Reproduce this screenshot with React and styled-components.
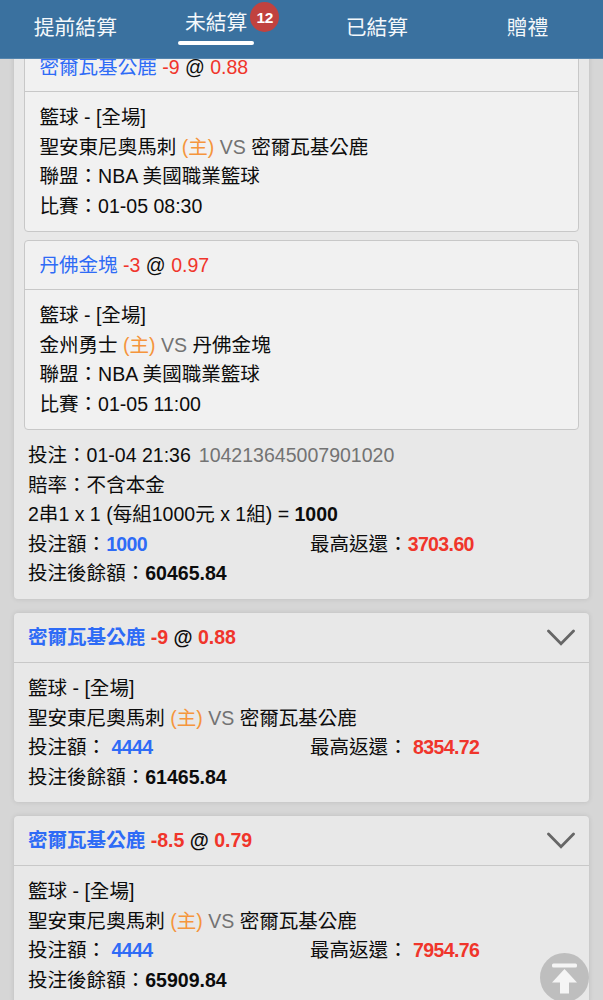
import React from 'react';
import styled, { createGlobalStyle } from 'styled-components';

const GlobalStyle = createGlobalStyle`
  * {
    box-sizing: border-box;
  }
  body {
    margin: 0;
    background: #d6d6d6;
    color: #0c0c0c;
    font-family: 'Liberation Sans', 'Noto Sans CJK TC', sans-serif;
    font-size: 19.55px;
    line-height: 29.5px;
  }
`;

const PageStyles = styled.div`
  height: 1000px;
  overflow: hidden;
`;

const TabBar = styled.nav`
  position: fixed;
  top: 0;
  left: 0;
  right: 0;
  z-index: 2;
  display: grid;
  grid-template-columns: repeat(4, 1fr);
  height: 59px;
  background: #3a719f;
  border-bottom: 1px solid #5585ad;
`;

const Tab = styled.div`
  display: flex;
  justify-content: center;
  align-items: flex-start;
  padding-top: ${({ $active }) => ($active ? '7px' : '12px')};
  padding-right: ${({ $active }) => ($active ? '20px' : '0')};
`;

const TabLabel = styled.span`
  position: relative;
  height: 38px;
  padding: 0 7px;
  color: #f4f8fb;
  font-size: 20.8px;
  line-height: 32px;

  &::after {
    content: '';
    display: ${({ $active }) => ($active ? 'block' : 'none')};
    height: 4px;
    margin: 2px -7px 0;
    border-radius: 2px;
    background: #fff;
  }
`;

const Badge = styled.span`
  position: absolute;
  top: -5px;
  right: -25px;
  width: 29px;
  height: 30px;
  border-radius: 50%;
  background: #c1423f;
  color: #fff;
  font-size: 15.5px;
  font-weight: bold;
  letter-spacing: -0.4px;
  line-height: 31px;
  text-align: center;
`;

const Feed = styled.main`
  display: flex;
  flex-direction: column;
  gap: 14px;
  padding: 0 14px;
`;

const Card = styled.section`
  flex: none;
  background: #e8e8e8;
  border-radius: 4px;
  box-shadow: 0 0 5px rgba(0, 0, 0, 0.12);
`;

const ParlayCard = styled(Card)`
  height: 599px;
  padding-top: 42px;
`;

const Legs = styled.div`
  display: flex;
  flex-direction: column;
  gap: 8px;
  padding: 0 10px;
`;

const Leg = styled.article`
  height: 190px;
  background: #f1f1f1;
  border: 1px solid #c8c8c8;
  border-radius: 4px;
`;

const LegTitle = styled.header`
  height: 49px;
  padding: 10px 14.5px 0;
  border-bottom: 1px solid #c8c8c8;
`;

const LegBody = styled.div`
  padding: 11px 14.5px 0;
`;

const CardTitle = styled.header`
  display: flex;
  justify-content: space-between;
  align-items: center;
  height: 50px;
  padding: 0 14px;
  font-weight: bold;
  border-bottom: 1px solid #c8c8c8;
`;

const CardBody = styled.div`
  padding: 11px 14px 10px;
`;

const Row = styled.div`
  white-space: nowrap;
`;

const SplitRow = styled.div`
  display: grid;
  grid-template-columns: 282px 1fr;
  white-space: nowrap;
`;

const Team = styled.span`
  color: #2e6bf6;
`;

const Odds = styled.span`
  color: #f0352b;
`;

const Home = styled.span`
  color: #f5953c;
`;

const Muted = styled.span`
  color: #737373;
`;

const TicketNo = styled(Muted)`
  margin-left: 2.5px;
`;

const Amount = styled.b`
  letter-spacing: -0.63px;
  color: ${({ $win }) => ($win ? '#f0352b' : '#2e6bf6')};
`;

const ChevronIcon = styled.svg`
  width: 28px;
  height: 18px;
  fill: none;
  stroke: #666;
  stroke-width: 2.8;
  stroke-linecap: round;
`;

const BackToTop = styled.button`
  position: fixed;
  left: 540px;
  top: 953px;
  width: 49px;
  height: 49px;
  padding: 0;
  border: 0;
  border-radius: 50%;
  background: #bebebe;
  svg {
    display: block;
    fill: #f5f5f5;
  }
`;

const tabs = [
  { label: '提前結算' },
  { label: '未結算', count: 12 },
  { label: '已結算' },
  { label: '贈禮' },
];

const legs = [
  {
    pick: '密爾瓦基公鹿',
    line: '-9',
    odds: '0.88',
    home: '聖安東尼奧馬刺',
    away: '密爾瓦基公鹿',
    time: '01-05 08:30',
  },
  {
    pick: '丹佛金塊',
    line: '-3',
    odds: '0.97',
    home: '金州勇士',
    away: '丹佛金塊',
    time: '01-05 11:00',
  },
];

const singles = [
  { line: '-9', odds: '0.88', stake: '4444', win: '8354.72', balance: '61465.84' },
  { line: '-8.5', odds: '0.79', stake: '4444', win: '7954.76', balance: '65909.84' },
];

function Pick({ team, line, odds }) {
  return (
    <span>
      <Team>{team}</Team> <Odds>{line}</Odds> @ <Odds>{odds}</Odds>
    </span>
  );
}

function Match({ home, away }) {
  return (
    <>
      <Row>籃球 - [全場]</Row>
      <Row>
        {home} <Home>(主)</Home> <Muted>VS</Muted> {away}
      </Row>
    </>
  );
}

export default function App() {
  return (
    <PageStyles>
      <GlobalStyle />
      <TabBar>
        {tabs.map(({ label, count }) => (
          <Tab key={label} $active={!!count}>
            <TabLabel $active={!!count}>
              {label}
              {count && <Badge>{count}</Badge>}
            </TabLabel>
          </Tab>
        ))}
      </TabBar>
      <Feed>
        <ParlayCard>
          <Legs>
            {legs.map((leg) => (
              <Leg key={leg.time}>
                <LegTitle>
                  <Pick team={leg.pick} line={leg.line} odds={leg.odds} />
                </LegTitle>
                <LegBody>
                  <Match home={leg.home} away={leg.away} />
                  <Row>聯盟：NBA 美國職業籃球</Row>
                  <Row>比賽：{leg.time}</Row>
                </LegBody>
              </Leg>
            ))}
          </Legs>
          <CardBody>
            <Row>
              投注：01-04 21:36 <TicketNo>104213645007901020</TicketNo>
            </Row>
            <Row>賠率：不含本金</Row>
            <Row>
              2串1 x 1 (每組1000元 x 1組) = <b>1000</b>
            </Row>
            <SplitRow>
              <span>
                投注額：<Amount>1000</Amount>
              </span>
              <span>
                最高返還：<Amount $win>3703.60</Amount>
              </span>
            </SplitRow>
            <Row>
              投注後餘額：<b>60465.84</b>
            </Row>
          </CardBody>
        </ParlayCard>
        {singles.map((bet) => (
          <Card key={bet.balance}>
            <CardTitle>
              <Pick team="密爾瓦基公鹿" line={bet.line} odds={bet.odds} />
              <ChevronIcon viewBox="0 0 28 18">
                <path d="M1.5 2 14 14.8 26.5 2" />
              </ChevronIcon>
            </CardTitle>
            <CardBody>
              <Match home="聖安東尼奧馬刺" away="密爾瓦基公鹿" />
              <SplitRow>
                <span>
                  投注額： <Amount>{bet.stake}</Amount>
                </span>
                <span>
                  最高返還： <Amount $win>{bet.win}</Amount>
                </span>
              </SplitRow>
              <Row>
                投注後餘額：<b>{bet.balance}</b>
              </Row>
            </CardBody>
          </Card>
        ))}
      </Feed>
      <BackToTop aria-label="回到頂部">
        <svg width="49" height="49" viewBox="0 0 49 49">
          <rect x="12" y="10.5" width="25" height="4" rx="1.5" />
          <path d="M24.5 16 37 29.5h-8v11h-9v-11h-8z" />
        </svg>
      </BackToTop>
    </PageStyles>
  );
}
